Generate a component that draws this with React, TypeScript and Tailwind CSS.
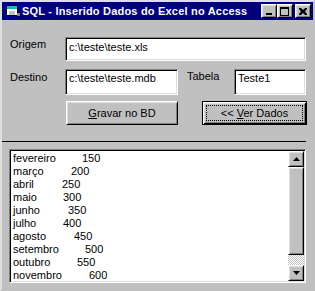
import React from 'react';

const raised =
  'bg-[#c0c0c0] border border-t-white border-l-white border-r-black border-b-black shadow-[inset_1px_1px_0_#dfdfdf,inset_-1px_-1px_0_#808080]';
const sunken =
  'bg-white border border-t-[#808080] border-l-[#808080] border-r-white border-b-white shadow-[inset_1px_1px_0_#000,inset_-1px_-1px_0_#dfdfdf]';

const months = [
  { name: 'fevereiro', value: '150', pos: 69 },
  { name: 'março', value: '200', pos: 58 },
  { name: 'abril', value: '250', pos: 49 },
  { name: 'maio', value: '300', pos: 50 },
  { name: 'junho', value: '350', pos: 55 },
  { name: 'julho', value: '400', pos: 50 },
  { name: 'agosto', value: '450', pos: 61 },
  { name: 'setembro', value: '500', pos: 72 },
  { name: 'outubro', value: '550', pos: 64 },
  { name: 'novembro', value: '600', pos: 76 },
];

const TitleIcon = () => (
  <svg width="16" height="14" viewBox="0 0 16 14">
    <rect x="1.5" y="1.5" width="11" height="10" fill="#fff" stroke="#000" />
    <rect x="2" y="2" width="10" height="3" fill="#00c0c0" />
    <rect x="4" y="7" width="6" height="4" fill="#c0c0c0" />
    <rect x="12" y="9" width="3" height="3" fill="#808080" />
    <rect x="13" y="12" width="2" height="1" fill="#000" />
  </svg>
);

const CaptionButton = ({ children, className = '' }: { children: React.ReactNode; className?: string }) => (
  <div className={`w-[16px] h-[14px] flex items-center justify-center ${raised} ${className}`}>{children}</div>
);

export default function App() {
  return (
    <div className="w-[315px] h-[291px] bg-[#c0c0c0] border-2 border-t-[#dfdfdf] border-l-[#dfdfdf] border-r-[#c0c0c0] border-b-[#c0c0c0] text-[11px] leading-[13px] text-black font-['Liberation_Sans',Arial,sans-serif] overflow-hidden">
      {/* title bar */}
      <div className="h-[18px] bg-[#000080] flex items-center pl-[3px] pr-[2px]">
        <TitleIcon />
        <span className="ml-[1px] text-white font-bold text-[11px] tracking-[0.2px] whitespace-nowrap">SQL - Inserido Dados do Excel no Access</span>
        <div className="ml-auto flex items-center">
          <CaptionButton>
            <div className="w-[6px] h-[2px] bg-black mt-[6px] -ml-[1px]" />
          </CaptionButton>
          <CaptionButton>
            <div className="w-[9px] h-[9px] border border-black border-t-2 -ml-[1px]" />
          </CaptionButton>
          <CaptionButton className="ml-[2px]">
            <svg width="8" height="7" viewBox="0 0 8 7" className="-ml-[1px]">
              <path d="M0 0h2l2 2 2-2h2v1L6 3.5 8 6v1H6L4 5 2 7H0V6l2-2.5L0 1z" fill="#000" />
            </svg>
          </CaptionButton>
        </div>
      </div>

      {/* Origem */}
      <div className="mt-[17px] flex items-start">
        <div className="w-[63px] pl-[8px] mt-[1px]">Origem</div>
        <div className={`w-[241px] h-[24px] px-[3px] pt-[3px] ${sunken}`}>c:\teste\teste.xls</div>
      </div>

      {/* Destino / Tabela */}
      <div className="mt-[8px] flex items-start">
        <div className="w-[63px] pl-[8px] mt-[2px]">Destino</div>
        <div className={`w-[113px] h-[26px] px-[3px] pt-[2px] ${sunken}`}>c:\teste\teste.mdb</div>
        <div className="ml-[9px] w-[47px] mt-[1px]">Tabela</div>
        <div className={`w-[72px] h-[26px] px-[3px] pt-[2px] ${sunken}`}>Teste1</div>
      </div>

      {/* buttons */}
      <div className="mt-[6px] flex items-start">
        <div className={`ml-[64px] w-[112px] h-[24px] flex items-center justify-center ${raised}`}>
          <span>
            <u>G</u>ravar no BD
          </span>
        </div>
        <div className="ml-[24px] w-[105px] h-[24px] border border-black bg-[#c0c0c0] shadow-[inset_1px_1px_0_#fff,inset_-1px_-1px_0_#000,inset_2px_2px_0_#dfdfdf,inset_-2px_-2px_0_#808080] p-[3px]">
          <div className="h-full border border-dotted border-black flex items-center justify-center">
            <span>
              &lt;&lt; <u>V</u>er Dados
            </span>
          </div>
        </div>
      </div>

      {/* separator */}
      <div className="mt-[16px] w-[304px] h-[1px] bg-black" />

      {/* list */}
      <div className={`mt-[7px] ml-[7px] w-[297px] h-[134px] flex p-[1px] ${sunken}`}>
        <div className="flex-1 pl-[2px] pt-[1px] overflow-hidden">
          {months.map((m) => (
            <div key={m.name} className="h-[13px] whitespace-nowrap">
              <span className="inline-block" style={{ width: m.pos }}>
                {m.name}
              </span>
              {m.value}
            </div>
          ))}
        </div>
        <div className="w-[16px] flex flex-col">
          <div className={`h-[16px] flex items-center justify-center ${raised}`}>
            <svg width="7" height="4" viewBox="0 0 7 4">
              <path d="M3.5 0L7 4H0z" fill="#000" />
            </svg>
          </div>
          <div className={`h-[88px] ${raised}`} />
          <div className="h-[10px] bg-[repeating-conic-gradient(#c0c0c0_0_25%,#fff_0_50%)] bg-[length:2px_2px]" />
          <div className={`h-[16px] flex items-center justify-center ${raised}`}>
            <svg width="7" height="4" viewBox="0 0 7 4">
              <path d="M0 0h7L3.5 4z" fill="#000" />
            </svg>
          </div>
        </div>
      </div>
    </div>
  );
}
